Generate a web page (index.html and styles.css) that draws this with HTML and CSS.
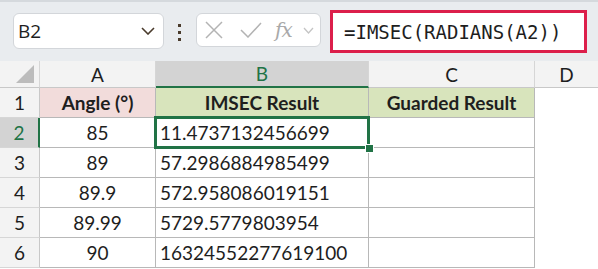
FILE: index.html
```html
<!DOCTYPE html>
<html lang="en">
<head>
    <meta charset="UTF-8">
    <title>IMSEC Sheet</title>
    <link rel="stylesheet" href="styles.css">
</head>
<body>
    <div class="formula-bar">
        <div class="name-box">
            <span>B2</span>
            <svg width="14" height="8" viewBox="0 0 14 8"><path d="M1 1 L7 7 L13 1" fill="none" stroke="#4a3b2c" stroke-width="1.6"/></svg>
        </div>
        <div class="dots"><i></i><i></i><i></i></div>
        <div class="fx-box">
            <svg width="18" height="18" viewBox="0 0 18 18"><path d="M1 1 L17 17 M17 1 L1 17" stroke="#b3b3b3" stroke-width="1.5"/></svg>
            <svg width="22" height="16" viewBox="0 0 22 16"><path d="M1 8 L8 15 L21 1" fill="none" stroke="#b3b3b3" stroke-width="1.5"/></svg>
            <span class="fx">fx</span>
            <svg class="more" width="11" height="7" viewBox="0 0 11 7"><path d="M1 1 L5.5 6 L10 1" fill="none" stroke="#c4c4c4" stroke-width="1.3"/></svg>
        </div>
        <div class="formula">=IMSEC(RADIANS(A2))</div>
    </div>

    <div class="sheet">
        <div class="hd corner"><svg width="19" height="18" viewBox="0 0 19 18"><path d="M18 0 L18 18 L0 18 Z" fill="#bcbcbc"/></svg></div>
        <div class="hd">A</div>
        <div class="hd col-sel">B</div>
        <div class="hd">C</div>
        <div class="hd last">D</div>

        <div class="rh">1</div>
        <div class="c title pink">Angle (°)</div>
        <div class="c title green">IMSEC Result</div>
        <div class="c title green">Guarded Result</div>
        <div class="c blank"></div>

        <div class="rh row-sel">2</div>
        <div class="c num">85</div>
        <div class="c val active">11.4737132456699<span class="handle"></span></div>
        <div class="c"></div>
        <div class="c blank"></div>

        <div class="rh">3</div>
        <div class="c num">89</div>
        <div class="c val">57.2986884985499</div>
        <div class="c"></div>
        <div class="c blank"></div>

        <div class="rh">4</div>
        <div class="c num">89.9</div>
        <div class="c val">572.958086019151</div>
        <div class="c"></div>
        <div class="c blank"></div>

        <div class="rh">5</div>
        <div class="c num">89.99</div>
        <div class="c val">5729.5779803954</div>
        <div class="c"></div>
        <div class="c blank"></div>

        <div class="rh">6</div>
        <div class="c num">90</div>
        <div class="c val">16324552277619100</div>
        <div class="c"></div>
        <div class="c blank"></div>
    </div>
</body>
</html>
```

FILE: styles.css
```css
/* Page */
body {
    margin: 0;
    width: 598px;
    height: 269px;
    overflow: hidden;
    background-color: #ffffff;
    font-family: Lato, "Open Sans", sans-serif;
}

/* Formula bar */
.formula-bar {
    height: 59px;
    border-top: 2px solid #d5d9dd;
    background-color: #e9ecef;
    display: flex;
    align-items: flex-start;
    padding-left: 13px;
}

.name-box {
    margin-top: 11px;
    width: 137px;
    height: 34px;
    background-color: #ffffff;
    border: 1px solid #d3d6da;
    border-radius: 6px;
    display: flex;
    align-items: center;
    justify-content: space-between;
    padding: 0 8px 0 4px;
    font-family: "Open Sans", sans-serif;
    font-size: 19px;
    color: #1e1e1e;
}

.dots {
    margin: 22px 0 0 14px;
    width: 4px;
    display: flex;
    flex-direction: column;
    gap: 4px;
}

.dots i {
    display: block;
    width: 3px;
    height: 3px;
    background-color: #4a3b2c;
}

.fx-box {
    margin: 11px 0 0 14px;
    width: 125px;
    height: 34px;
    background-color: #ffffff;
    border: 1px solid #d3d6da;
    border-radius: 6px;
    display: flex;
    align-items: center;
    padding-left: 8px;
    box-sizing: border-box;
}

.fx-box svg:nth-child(2) {
    margin-left: 17px;
}

.fx {
    margin-left: 13px;
    font-family: "DejaVu Serif", serif;
    font-style: italic;
    font-size: 20px;
    color: #a9a9a9;
    letter-spacing: -1px;
}

.fx-box .more {
    margin-left: 11px;
}

.formula {
    margin: 8px 0 0 9px;
    width: 240px;
    height: 37px;
    background-color: #ffffff;
    border: 3px solid #dc1f4b;
    display: flex;
    align-items: center;
    padding-left: 11px;
    font-family: "DejaVu Sans Mono", monospace;
    font-size: 19px;
    color: #1e1e1e;
}

/* Sheet grid */
.sheet {
    display: grid;
    grid-template-columns: 40px 116px 213px 166px 1fr;
    grid-template-rows: 27px repeat(6, 30px);
    font-size: 19px;
    color: #1e1e1e;
}

.hd {
    background-color: #f3f3f3;
    border-right: 1px solid #d6d6d6;
    border-bottom: 1px solid #c8c8c8;
    display: flex;
    align-items: center;
    justify-content: center;
}

.hd.last {
    border-right: none;
}

.corner {
    justify-content: flex-end;
    align-items: flex-end;
    padding: 0 4px 4px 0;
}

.col-sel {
    background-color: #d3d3d3;
    color: #217346;
    border-bottom: 2px solid #217346;
}

.rh {
    background-color: #f3f3f3;
    border-right: 1px solid #c8c8c8;
    border-bottom: 1px solid #d6d6d6;
    display: flex;
    align-items: center;
    justify-content: center;
}

.row-sel {
    background-color: #d3d3d3;
    color: #217346;
    border-right: 2px solid #217346;
}

.c {
    border-right: 1px solid #b8b8b8;
    border-bottom: 1px solid #b8b8b8;
    display: flex;
    align-items: center;
    white-space: nowrap;
}

.c.blank {
    border: none;
}

.title {
    font-weight: bold;
    justify-content: center;
}

.pink {
    background-color: #f2dcdb;
}

.green {
    background-color: #d8e4bc;
}

.num {
    justify-content: center;
}

.val {
    padding-left: 4px;
}

/* Active cell */
.active {
    position: relative;
}

.active::after {
    content: "";
    position: absolute;
    left: -2px;
    top: -2px;
    right: -2px;
    bottom: -2px;
    border: 3px solid #217346;
}

.handle {
    position: absolute;
    right: -6px;
    bottom: -6px;
    width: 7px;
    height: 7px;
    background-color: #217346;
    border: 1px solid #ffffff;
    z-index: 2;
}
```
